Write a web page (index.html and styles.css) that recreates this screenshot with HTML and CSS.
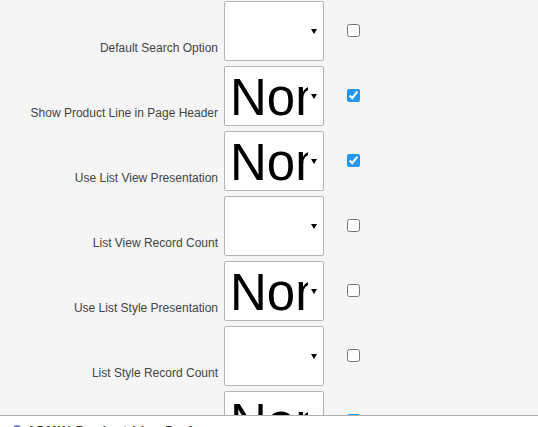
FILE: index.html
```html
<!DOCTYPE html>
<html lang="en">
<head>
  <meta charset="UTF-8">
  <title>User Preferences</title>
  <link rel="stylesheet" href="styles.css">
</head>
<body>
  <div class="prefs">
    <div class="row">
      <label class="label">Default Search Option</label>
      <div class="pick"><span class="value"></span><span class="arrow"></span></div>
      <div class="flag"><input type="checkbox"></div>
    </div>
    <div class="row">
      <label class="label">Show Product Line in Page Header</label>
      <div class="pick"><span class="value">None</span><span class="arrow"></span></div>
      <div class="flag"><input type="checkbox" checked></div>
    </div>
    <div class="row">
      <label class="label">Use List View Presentation</label>
      <div class="pick"><span class="value">None</span><span class="arrow"></span></div>
      <div class="flag"><input type="checkbox" checked></div>
    </div>
    <div class="row">
      <label class="label">List View Record Count</label>
      <div class="pick"><span class="value"></span><span class="arrow"></span></div>
      <div class="flag"><input type="checkbox"></div>
    </div>
    <div class="row">
      <label class="label">Use List Style Presentation</label>
      <div class="pick"><span class="value">None</span><span class="arrow"></span></div>
      <div class="flag"><input type="checkbox"></div>
    </div>
    <div class="row">
      <label class="label">List Style Record Count</label>
      <div class="pick"><span class="value"></span><span class="arrow"></span></div>
      <div class="flag"><input type="checkbox"></div>
    </div>
    <div class="row">
      <label class="label">Show Favorites</label>
      <div class="pick"><span class="value">None</span><span class="arrow"></span></div>
      <div class="flag"><input type="checkbox" checked></div>
    </div>
  </div>

  <div class="footer">
    <span class="dot"></span>
    <span class="footer-text">ADMIN Product Line Preferences</span>
  </div>
</body>
</html>
```

FILE: styles.css
```css
body {
  margin: 0;
  background: #f5f5f5;
  font-family: "Liberation Sans", Arial, sans-serif;
  font-size: 12px;
  color: #444;
  height: 427px;
  overflow: hidden;
}
.prefs {
  padding-top: 1px;
}
.row {
  display: grid;
  grid-template-columns: 218px 100px 1fr;
  column-gap: 6px;
  height: 60px;
  margin-bottom: 5px;
}
.label {
  align-self: end;
  text-align: right;
  padding-bottom: 6px;
  white-space: nowrap;
}
.pick {
  display: flex;
  align-items: center;
  box-sizing: border-box;
  height: 60px;
  background: #fff;
  border: 1px solid #b4b4b4;
  border-radius: 2px;
  padding: 0 6px 0 5px;
  overflow: hidden;
}
.value {
  flex: 1;
  min-width: 0;
  overflow: hidden;
  white-space: nowrap;
  font-size: 51px;
  line-height: 58px;
  color: #000;
  padding-top: 4px;
}
.arrow {
  width: 0;
  height: 0;
  border-left: 3px solid transparent;
  border-right: 3px solid transparent;
  border-top: 5px solid #000;
  margin-left: 3px;
}
.flag {
  display: flex;
  align-items: center;
  padding-left: 17px;
}
.flag input {
  margin: 0 0 2px;
  width: 13px;
  height: 13px;
  accent-color: #2196f3;
}
.footer {
  position: fixed;
  left: 0;
  right: 0;
  top: 415px;
  height: 20px;
  background: #fff;
  border-top: 1px solid #b0b0b0;
  display: flex;
  align-items: flex-start;
  gap: 6px;
  padding: 8px 0 0 13px;
}
.dot {
  width: 8px;
  height: 8px;
  border-radius: 50%;
  background: #7a7ad0;
  margin-top: 1px;
}
.footer-text {
  font-size: 12px;
  font-weight: bold;
  color: #333;
  letter-spacing: 1px;
}
```
